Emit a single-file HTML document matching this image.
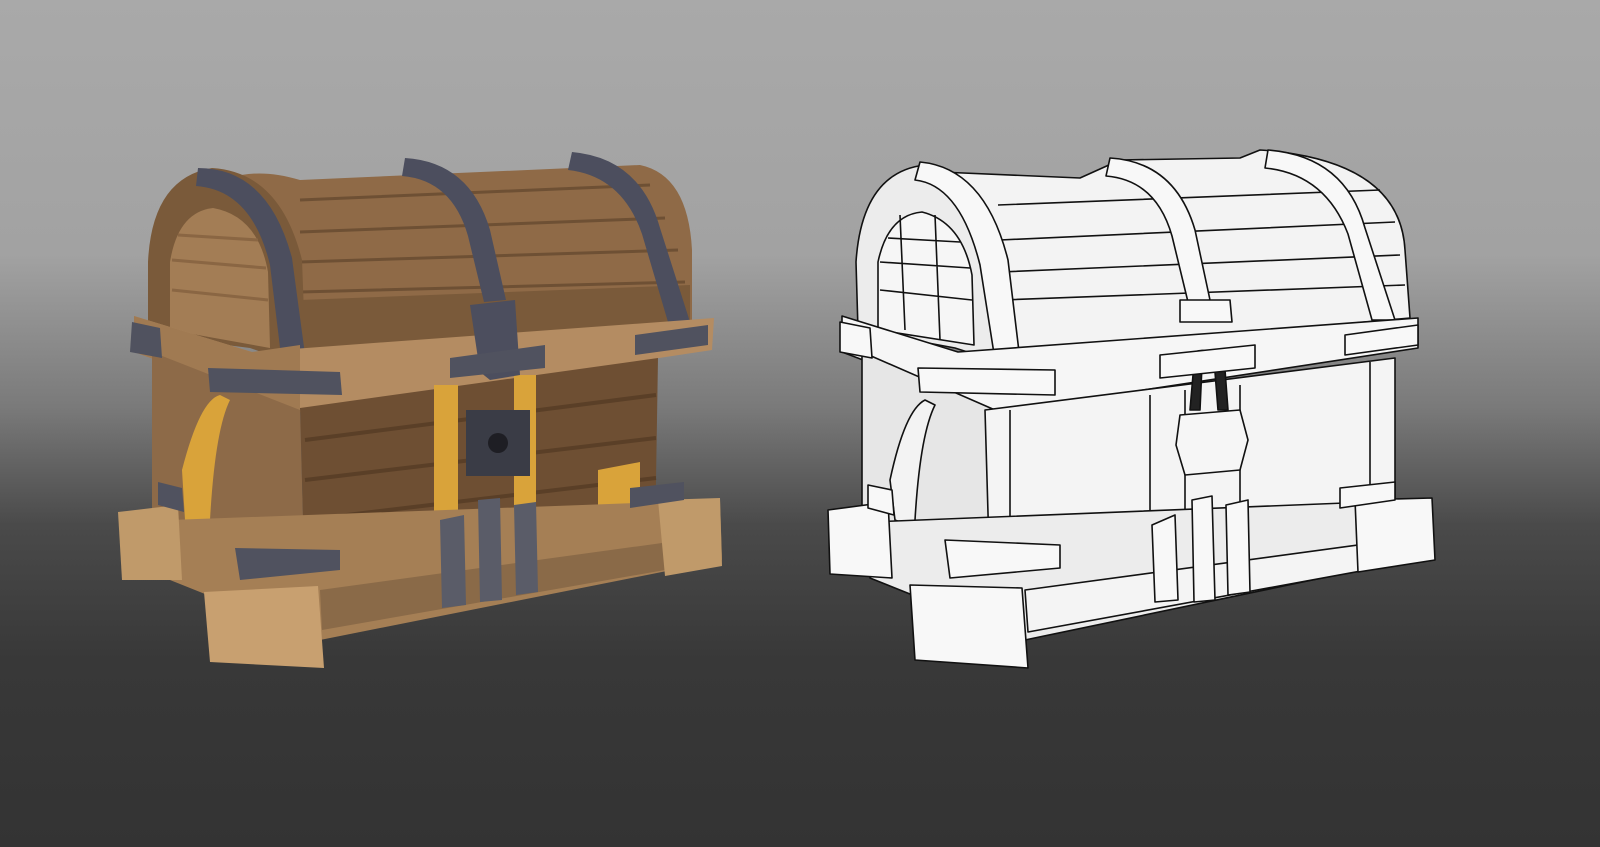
<!DOCTYPE html>
<html><head><meta charset="utf-8"><style>
html,body{margin:0;padding:0;width:1600px;height:847px;overflow:hidden}
body{background:linear-gradient(to bottom,#a9a9a9 0%,#a2a2a2 30%,#7a7a7a 48%,#4a4a4a 62%,#383838 78%,#333 100%)}
svg{position:absolute;left:0;top:0}
</style></head><body>
<svg width="1600" height="847" viewBox="0 0 1600 847">
<!-- LEFT CHEST -->
<g>
  <!-- lid -->
  <path d="M230,178 Q260,168 300,180 L640,165 Q688,175 692,250 L692,322 L300,362 L300,300 Q290,215 230,178 Z" fill="#8f6a47"/>
  <path d="M300,200 L650,185 M300,232 L665,218 M300,262 L678,250 M300,292 L685,282" stroke="#6e5034" stroke-width="3" fill="none"/>
  <path d="M300,300 L690,285 L690,322 L300,362 Z" fill="#7a5a3a"/>
  <!-- side arch -->
  <path d="M148,335 L148,262 Q152,178 212,168 Q280,172 302,260 L306,368 L250,348 Z" fill="#7a5a3a"/>
  <path d="M170,330 L170,262 Q178,212 213,208 Q258,216 268,272 L270,348 Z" fill="#a37d55"/>
  <path d="M172,290 L268,300 M172,260 L266,268 M178,235 L258,240" stroke="#8a6643" stroke-width="3"/>
  <!-- straps -->
  <path d="M198,168 Q268,168 292,258 L306,362 L282,364 L270,265 Q252,190 196,186 Z" fill="#4c4e5e"/>
  <path d="M405,158 Q470,162 490,230 L506,300 L484,302 L468,236 Q452,180 402,176 Z" fill="#4c4e5e"/>
  <path d="M572,152 Q640,158 660,228 L690,322 L668,322 L642,234 Q622,176 568,170 Z" fill="#4c4e5e"/>
  <!-- rim -->
  <path d="M134,316 L252,352 L714,318 L712,350 L300,412 L134,352 Z" fill="#b48c62"/>
  <path d="M134,316 L252,352 L300,345 L300,412 L134,352 Z" fill="#a07a52"/>
  <!-- side body -->
  <path d="M152,352 L300,410 L305,588 L152,528 Z" fill="#8d6a48"/>
  <path d="M182,470 Q200,400 220,395 L230,400 Q215,430 210,520 L240,540 L185,520 Z" fill="#d9a33a"/>
  <!-- front body -->
  <path d="M300,408 L658,358 L655,542 L305,588 Z" fill="#6e4f33"/>
  <path d="M305,440 L656,395 M305,480 L656,438 M305,520 L656,478 M305,555 L656,515" stroke="#5a3f27" stroke-width="4"/>
  <rect x="434" y="385" width="24" height="175" fill="#d9a33a"/>
  <rect x="514" y="375" width="22" height="170" fill="#d9a33a"/>
  <path d="M598,470 L640,462 L640,520 L598,528 Z" fill="#d9a33a"/>
  <path d="M308,522 L345,520 L355,565 L318,580 Z" fill="#d9a33a"/>
  <!-- base -->
  <path d="M170,520 L720,500 L722,560 L320,640 L170,580 Z" fill="#a57f55"/>
  <path d="M320,590 L720,535 L722,560 L322,630 Z" fill="#8a6a48"/>
  <path d="M118,512 L178,505 L182,580 L122,580 Z" fill="#c09a6a"/>
  <path d="M204,592 L318,586 L324,668 L210,662 Z" fill="#c8a070"/>
  <path d="M658,500 L720,498 L722,566 L665,576 Z" fill="#c09a6a"/>
  <!-- hinges / lock -->
  <path d="M470,305 L515,300 L520,375 L490,380 L480,372 Z" fill="#4c4e5e"/>
  <rect x="466" y="410" width="64" height="66" fill="#3a3c46"/>
  <circle cx="498" cy="443" r="10" fill="#1e1e24"/>
  <path d="M450,358 L545,345 L545,368 L450,378 Z" fill="#50525f"/>
  <path d="M208,368 L340,372 L342,395 L210,392 Z" fill="#50525f"/>
  <path d="M132,322 L160,328 L162,358 L130,352 Z" fill="#50525f"/>
  <path d="M635,335 L708,325 L708,345 L635,355 Z" fill="#50525f"/>
  <path d="M235,548 L340,550 L340,570 L240,580 Z" fill="#50525f"/>
  <path d="M158,482 L182,488 L184,512 L158,505 Z" fill="#50525f"/>
  <path d="M630,488 L684,482 L684,500 L630,508 Z" fill="#50525f"/>
  <path d="M440,520 L464,515 L466,605 L442,608 Z M478,500 L500,498 L502,600 L480,602 Z M514,505 L536,502 L538,592 L516,595 Z" fill="#5a5c68"/>
</g>
<!-- RIGHT CHEST -->
<g stroke="#111" stroke-width="1.6" stroke-linejoin="round">
  <path d="M940,172 L1080,178 L1120,160 L1240,158 L1260,150 Q1400,160 1405,250 L1410,318 L1000,355 L990,270 Z" fill="#f3f3f3"/>
  <path d="M998,205 L1380,190 M1000,240 L1395,222 M1000,272 L1400,255 M1002,300 L1405,285" fill="none"/>
  <path d="M858,330 L856,262 Q862,172 925,165 Q985,172 1005,260 L1008,365 L955,348 Z" fill="#ececec"/>
  <path d="M878,330 L878,262 Q888,215 922,212 Q962,222 972,275 L974,345 Z" fill="#f6f6f6"/>
  <path d="M880,290 L972,300 M880,262 L970,268 M888,238 L960,242 M900,215 L905,330 M935,215 L940,340" fill="none"/>
  <path d="M920,162 Q985,168 1008,260 L1020,360 L995,360 L980,265 Q960,185 915,180 Z" fill="#f8f8f8"/>
  <path d="M1110,158 Q1175,162 1195,230 L1210,300 L1188,302 L1172,236 Q1156,180 1106,176 Z" fill="#f8f8f8"/>
  <path d="M1268,150 Q1345,156 1365,228 L1395,320 L1372,320 L1348,234 Q1325,174 1265,168 Z" fill="#f8f8f8"/>
  <path d="M842,316 L958,352 L1418,318 L1418,348 L1000,412 L842,352 Z" fill="#f6f6f6"/>
  <path d="M862,352 L995,410 L998,585 L862,525 Z" fill="#e6e6e6"/>
  <path d="M890,480 Q905,410 925,400 L935,405 Q920,435 915,520 L945,540 L895,520 Z" fill="#f3f3f3"/>
  <path d="M985,410 L1395,358 L1395,522 L990,582 Z" fill="#f4f4f4"/>
  <path d="M1010,410 L1010,580 M1150,395 L1150,560 M1185,390 L1185,555 M1240,385 L1240,548 M1370,362 L1370,525" fill="none"/>
  <path d="M870,522 L1420,500 L1432,555 L1025,640 L870,578 Z" fill="#ececec"/>
  <path d="M1025,590 L1432,535 L1432,558 L1028,632 Z" fill="#f4f4f4"/>
  <path d="M828,510 L888,502 L892,578 L830,574 Z" fill="#f8f8f8"/>
  <path d="M910,585 L1022,588 L1028,668 L915,660 Z" fill="#f8f8f8"/>
  <path d="M1355,500 L1432,498 L1435,560 L1358,572 Z" fill="#f8f8f8"/>
  <path d="M1180,300 L1230,300 L1232,322 L1180,322 Z" fill="#f8f8f8"/>
  <path d="M1195,352 Q1212,345 1225,370 L1228,410 L1218,410 L1215,372 Q1210,360 1202,365 L1200,410 L1190,410 Z" fill="#222"/>
  <path d="M1180,415 L1240,410 L1248,440 L1240,470 L1185,475 L1176,445 Z" fill="#f6f6f6"/>
  <path d="M1160,355 L1255,345 L1255,368 L1160,378 Z" fill="#f8f8f8"/>
  <path d="M918,368 L1055,370 L1055,395 L920,392 Z" fill="#f8f8f8"/>
  <path d="M840,322 L870,328 L872,358 L840,352 Z" fill="#f8f8f8"/>
  <path d="M1345,335 L1418,325 L1418,345 L1345,355 Z" fill="#f8f8f8"/>
  <path d="M945,540 L1060,545 L1060,568 L950,578 Z" fill="#f8f8f8"/>
  <path d="M868,485 L892,490 L894,515 L868,508 Z" fill="#f8f8f8"/>
  <path d="M1340,488 L1395,482 L1395,500 L1340,508 Z" fill="#f8f8f8"/>
  <path d="M1152,525 L1175,515 L1178,600 L1155,602 Z M1192,500 L1212,496 L1215,600 L1194,602 Z M1226,505 L1248,500 L1250,592 L1228,595 Z" fill="#f8f8f8"/>
</g>
</svg>
</body></html>
